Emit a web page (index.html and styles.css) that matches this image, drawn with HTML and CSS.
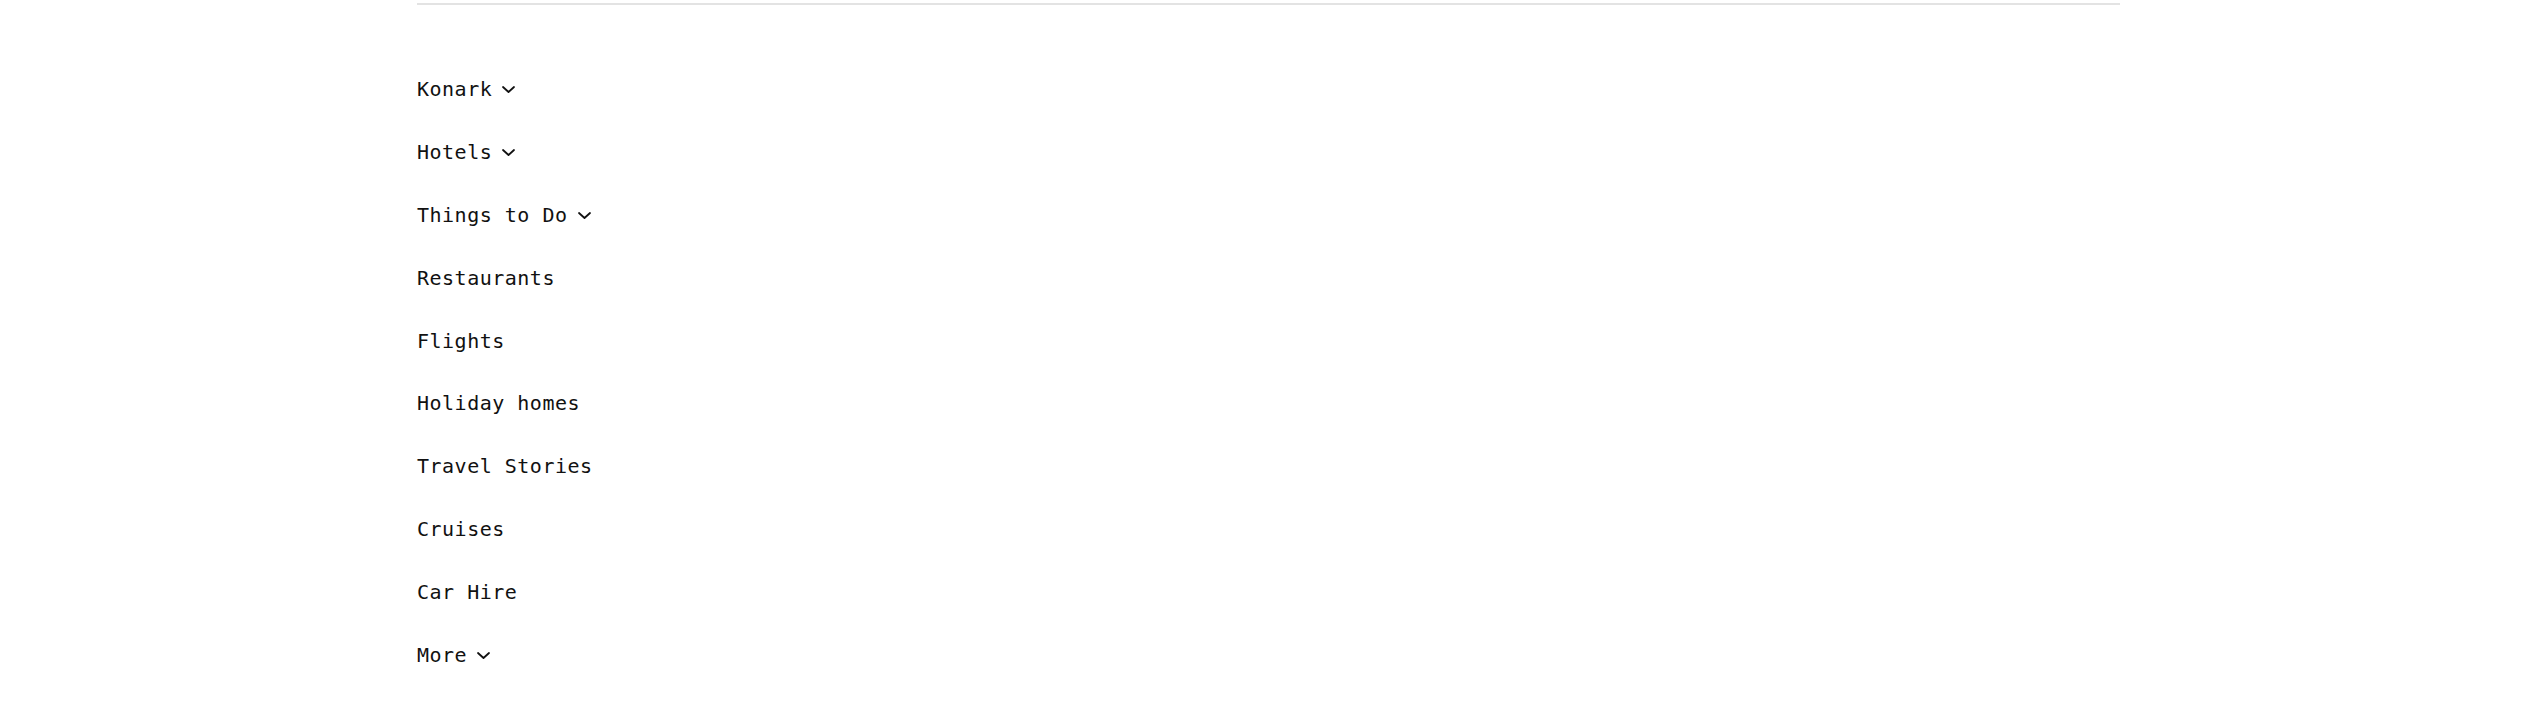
FILE: index.html
```html
<!DOCTYPE html>
<html lang="en">
<head>
<meta charset="utf-8">
<title>Konark navigation</title>
<link rel="stylesheet" href="styles.css">
</head>
<body>
<div class="page">
  <div class="divider"></div>
  <nav class="menu">
    <ul class="menu-list">
      <li class="menu-item"><span>Konark</span><svg class="chev" viewBox="0 0 13 7" width="13" height="7"><polyline points="1,1 6.5,6 12,1"/></svg></li>
      <li class="menu-item"><span>Hotels</span><svg class="chev" viewBox="0 0 13 7" width="13" height="7"><polyline points="1,1 6.5,6 12,1"/></svg></li>
      <li class="menu-item"><span>Things to Do</span><svg class="chev" viewBox="0 0 13 7" width="13" height="7"><polyline points="1,1 6.5,6 12,1"/></svg></li>
      <li class="menu-item"><span>Restaurants</span></li>
      <li class="menu-item"><span>Flights</span></li>
      <li class="menu-item"><span>Holiday homes</span></li>
      <li class="menu-item"><span>Travel Stories</span></li>
      <li class="menu-item"><span>Cruises</span></li>
      <li class="menu-item"><span>Car Hire</span></li>
      <li class="menu-item"><span>More</span><svg class="chev" viewBox="0 0 13 7" width="13" height="7"><polyline points="1,1 6.5,6 12,1"/></svg></li>
    </ul>
  </nav>
</div>
</body>
</html>
```
FILE: styles.css
```css
html, body {
  margin: 0;
  padding: 0;
  background: #ffffff;
}
.page {
  margin-left: 417px;
  width: 1703px;
  padding-top: 3px;
}
.divider {
  height: 0;
  border-top: 2px solid #e3e3e3;
}
.menu {
  padding-top: 53px;
}
.menu-list {
  list-style: none;
  margin: 0;
  padding: 0;
}
.menu-item {
  height: 62.9px;
  display: flex;
  align-items: center;
  font-family: "DejaVu Sans Mono", "Liberation Mono", monospace;
  font-size: 20px;
  letter-spacing: 0.5px;
  line-height: 62.9px;
  color: #111111;
}
.chev {
  margin-left: 10px;
  margin-top: 1px;
  fill: none;
  stroke: #111111;
  stroke-width: 1.8;
  stroke-linecap: round;
  stroke-linejoin: round;
}
```
